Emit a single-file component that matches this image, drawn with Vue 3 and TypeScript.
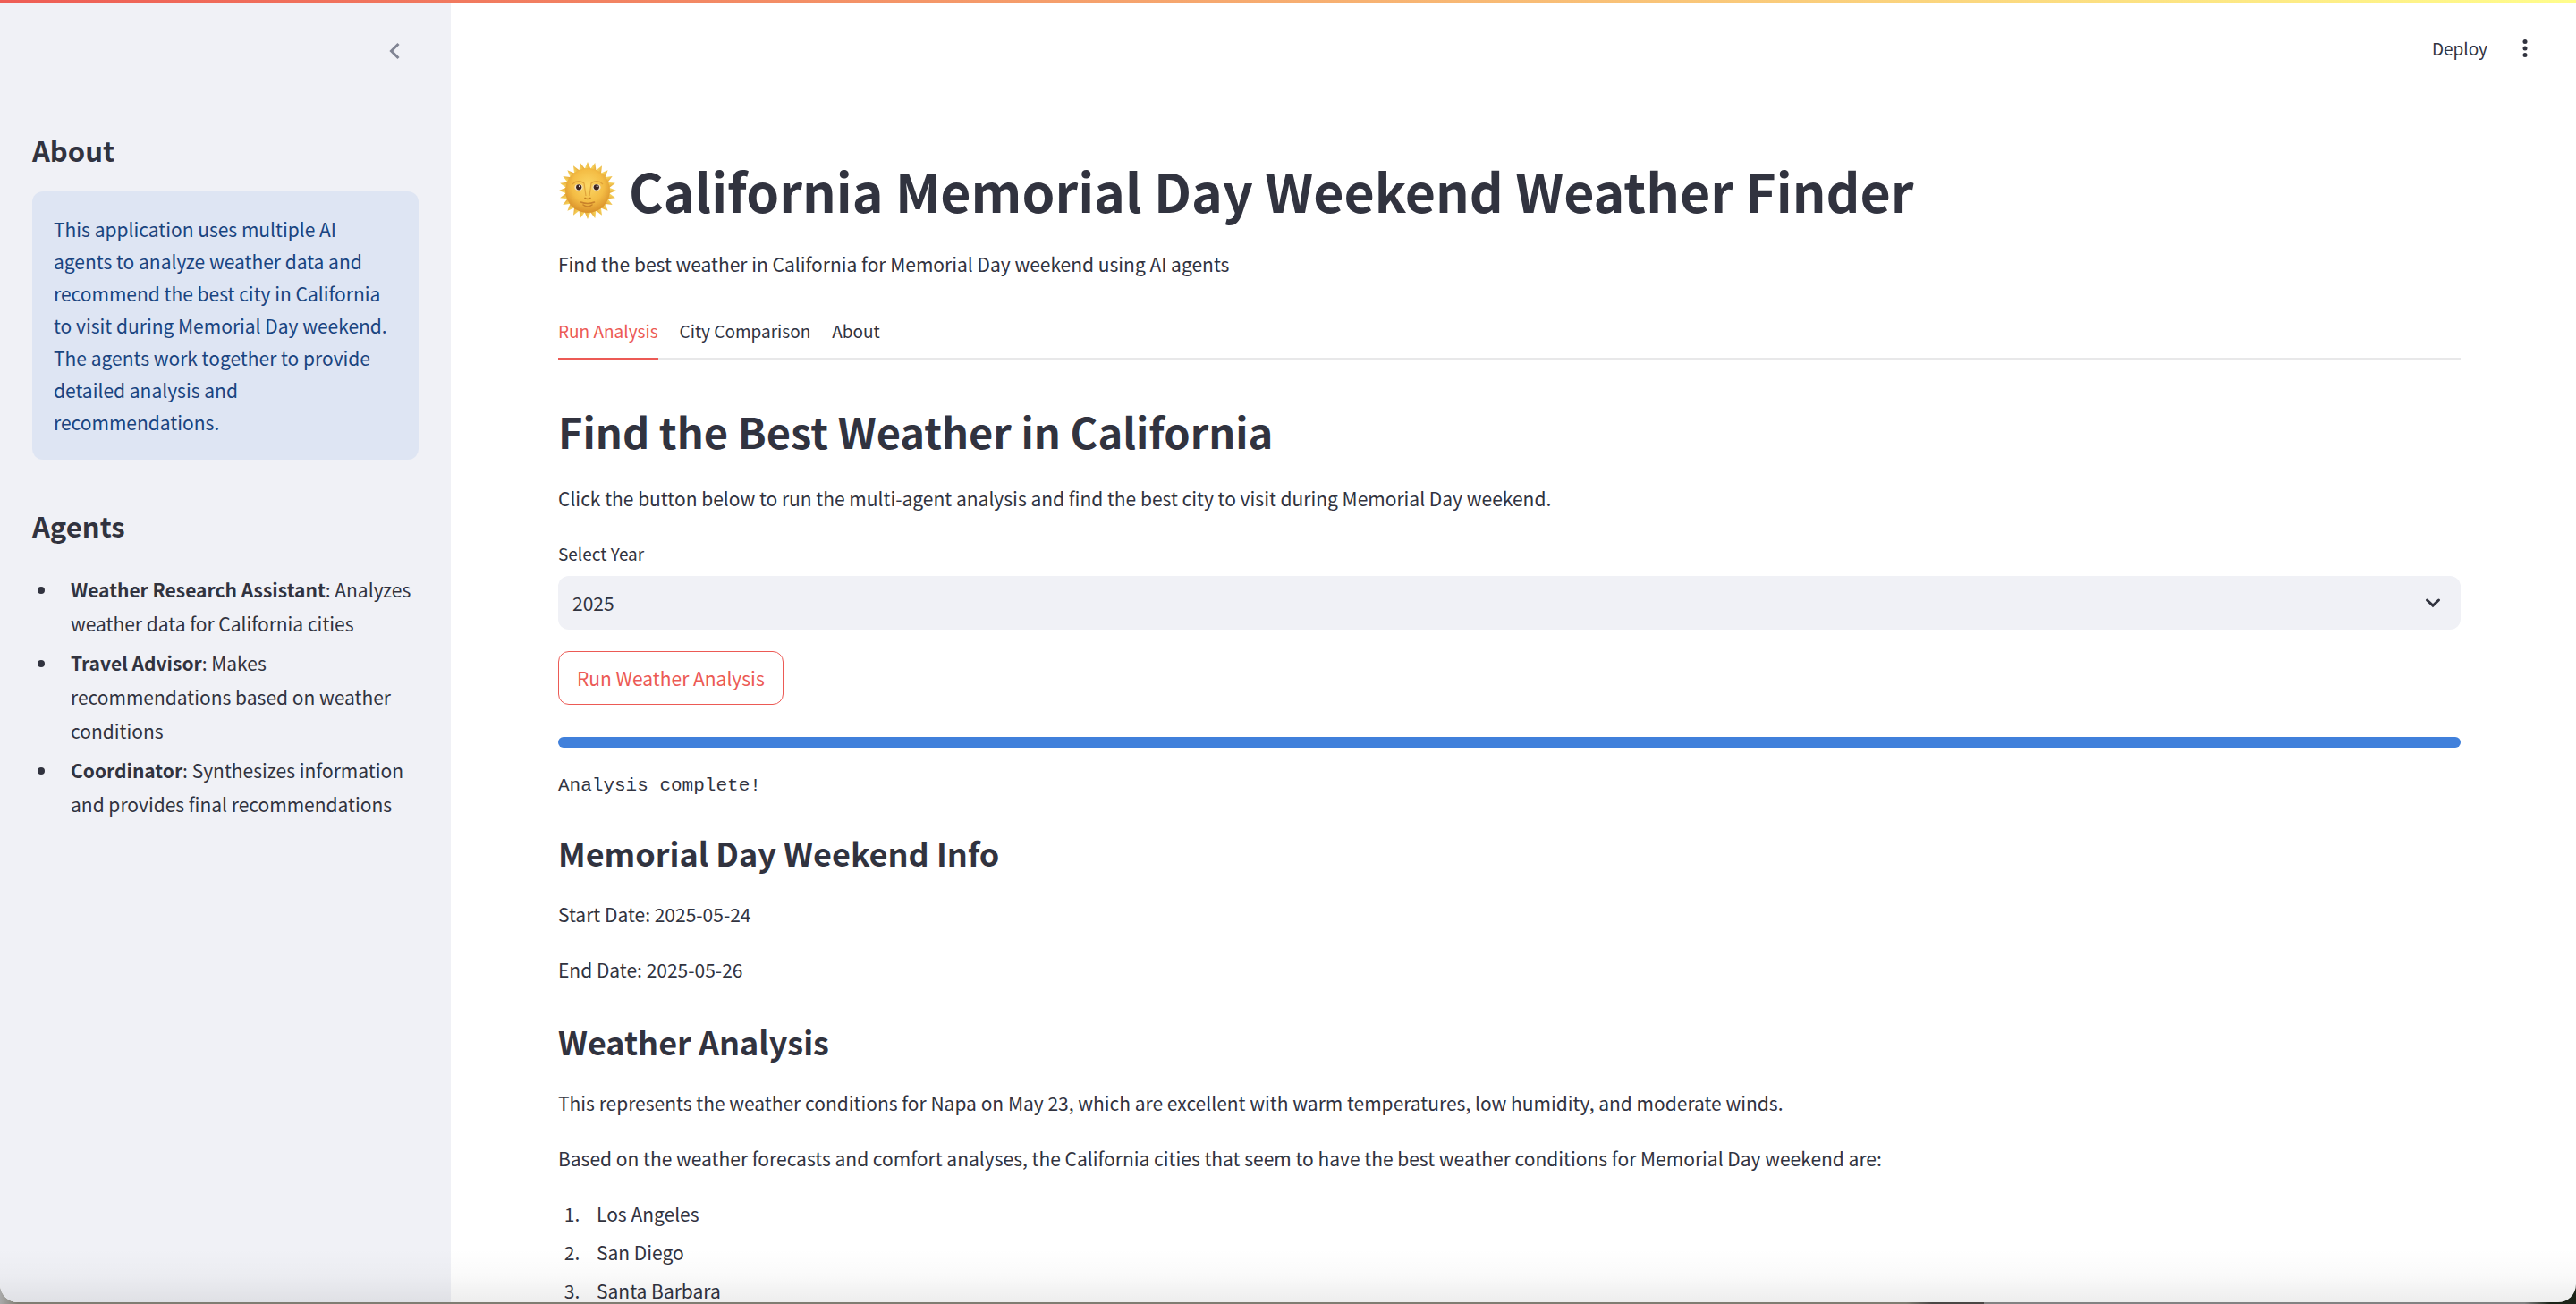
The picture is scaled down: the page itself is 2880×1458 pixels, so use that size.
<script setup lang="ts">
import { ref } from 'vue'

interface Agent {
  name: string
  role: string
}

const agents: Agent[] = [
  { name: 'Weather Research Assistant', role: 'Analyzes weather data for California cities' },
  { name: 'Travel Advisor', role: 'Makes recommendations based on weather conditions' },
  { name: 'Coordinator', role: 'Synthesizes information and provides final recommendations' },
]

const tabs = ['Run Analysis', 'City Comparison', 'About']
const activeTab = ref('Run Analysis')
const years = [2024, 2025, 2026]
const year = ref(2025)
const cities = ['Los Angeles', 'San Diego', 'Santa Barbara']

const rays = Array.from({ length: 24 }, (_, i) => i * 15)
</script>

<template>
  <div class="desktop">
    <div class="window">
      <div class="decoration"></div>
      <aside class="sidebar">
        <div class="sidebar-header">
          <button class="icon-button" type="button" aria-label="Collapse sidebar">
            <svg width="36" height="36" viewBox="0 0 36 36">
              <path d="M22.500 10 L14.500 18 L22.500 26" fill="none" stroke="#808493" stroke-width="3" />
            </svg>
          </button>
        </div>
        <h2 class="side-title">About</h2>
        <p class="notice">
          This application uses multiple AI agents to analyze weather data and recommend the best city in California to
          visit during Memorial Day weekend. The agents work together to provide detailed analysis and recommendations.
        </p>
        <h2 class="side-title agents-title">Agents</h2>
        <ul class="agents">
          <li v-for="agent in agents" :key="agent.name"><strong>{{ agent.name }}</strong>: {{ agent.role }}</li>
        </ul>
      </aside>

      <div class="page">
        <header class="toolbar">
          <button class="deploy" type="button">Deploy</button>
          <button class="icon-button" type="button" aria-label="Main menu">
            <svg width="36" height="36" viewBox="0 0 36 36" fill="#31333f">
              <circle cx="18" cy="10.500" r="2.500" />
              <circle cx="18" cy="18" r="2.500" />
              <circle cx="18" cy="25.500" r="2.500" />
            </svg>
          </button>
        </header>

        <main class="content">
          <h1 class="title">
            <svg class="sun" viewBox="0 0 66 66" role="img" aria-label="Sun with face">
              <defs>
                <radialGradient id="face" cx="0.5" cy="0.4" r="0.6">
                  <stop offset="0" stop-color="#fbd766" />
                  <stop offset="0.6" stop-color="#f4bd45" />
                  <stop offset="1" stop-color="#d9902a" />
                </radialGradient>
                <linearGradient id="ray" x1="0" y1="0" x2="1" y2="0">
                  <stop offset="0" stop-color="#fbe36a" />
                  <stop offset="1" stop-color="#e5a233" />
                </linearGradient>
              </defs>
              <path
                v-for="angle in rays"
                :key="angle"
                d="M29.200 10 L33 1 L36.800 10 Z"
                fill="url(#ray)"
                :transform="`rotate(${angle} 33 33)`"
              />
              <circle cx="33" cy="33" r="25" fill="url(#face)" />
              <path d="M16 26 Q22 20 29 25 L31 39 M50 26 Q44 20 37 25 L35 39" fill="none" stroke="#d99a35" stroke-width="1.200" opacity="0.8" />
              <ellipse cx="23" cy="29.500" rx="4.600" ry="3.400" fill="#f3e2c0" />
              <ellipse cx="43" cy="29.500" rx="4.600" ry="3.400" fill="#f3e2c0" />
              <circle cx="23.200" cy="29.300" r="3.100" fill="#3b2420" />
              <circle cx="42.800" cy="29.300" r="3.100" fill="#3b2420" />
              <circle cx="24" cy="28.300" r="1" fill="#ffffff" />
              <circle cx="43.600" cy="28.300" r="1" fill="#ffffff" />
              <path d="M29.500 41 Q33 44 36.500 41" fill="none" stroke="#c47f22" stroke-width="1.600" />
              <path d="M25.500 46 Q33 49 40.500 46 M28 49 Q33 53 38 49" fill="none" stroke="#c9822a" stroke-width="1.600" stroke-linecap="round" />
            </svg>
            <span>California Memorial Day Weekend Weather Finder</span>
          </h1>
          <p class="text">Find the best weather in California for Memorial Day weekend using AI agents</p>

          <div class="tabs" role="tablist">
            <button
              v-for="tab in tabs"
              :key="tab"
              type="button"
              role="tab"
              class="tab"
              :class="{ active: tab === activeTab }"
              :aria-selected="tab === activeTab"
              @click="activeTab = tab"
            >
              {{ tab }}
            </button>
          </div>

          <h2 class="heading">Find the Best Weather in California</h2>
          <p class="text">
            Click the button below to run the multi-agent analysis and find the best city to visit during Memorial Day
            weekend.
          </p>

          <label class="label" for="year">Select Year</label>
          <div class="select-wrap">
            <select id="year" v-model="year" class="select">
              <option v-for="y in years" :key="y" :value="y">{{ y }}</option>
            </select>
            <svg class="chevron" width="24" height="24" viewBox="0 0 24 24">
              <path d="M5.500 9 L12 15.200 L18.500 9" fill="none" stroke="#31333f" stroke-width="3" stroke-linecap="round" />
            </svg>
          </div>

          <button class="run" type="button">Run Weather Analysis</button>
          <div class="progress" role="progressbar" aria-label="Analysis progress" aria-valuenow="100"></div>
          <p class="status">Analysis complete!</p>

          <h3 class="subheading">Memorial Day Weekend Info</h3>
          <p class="text spaced">Start Date: 2025-05-24</p>
          <p class="text">End Date: 2025-05-26</p>

          <h3 class="subheading second">Weather Analysis</h3>
          <p class="text spaced">
            This represents the weather conditions for Napa on May 23, which are excellent with warm temperatures, low
            humidity, and moderate winds.
          </p>
          <p class="text spaced">
            Based on the weather forecasts and comfort analyses, the California cities that seem to have the best weather
            conditions for Memorial Day weekend are:
          </p>
          <ol class="cities">
            <li v-for="city in cities" :key="city">{{ city }}</li>
          </ol>
        </main>
      </div>
      <div class="shade"></div>
    </div>
  </div>
</template>

<style>
body {
  margin: 0;
  overflow: hidden;
}
</style>

<style scoped>
.desktop {
  height: 100vh;
  background: linear-gradient(90deg, #a9a9a9 0, #7f7d72 20px, #7f7d72 74%, #4a4644 75%, #4a4644 77%, #828282 77%, #828282 98%, #1c2418 99%);
  color: #31333f;
  font-family: "Noto Sans CJK SC", "Noto Sans", sans-serif;
  font-size: 21px;
  line-height: 38px;
}

.window {
  position: relative;
  display: flex;
  height: calc(100vh - 2px);
  overflow: hidden;
  border-radius: 0 0 20px 20px;
  background: #ffffff;
}

.decoration {
  position: absolute;
  top: 0;
  left: 0;
  right: 0;
  z-index: 2;
  height: 3px;
  background: linear-gradient(90deg, #ee5d55, #fffd8c);
}

.shade {
  position: absolute;
  left: 0;
  right: 0;
  bottom: 0;
  height: 60px;
  pointer-events: none;
  background: linear-gradient(180deg, rgba(0, 0, 0, 0), rgba(0, 0, 0, 0.02) 50%, rgba(0, 0, 0, 0.07));
}

h1,
h2,
h3,
p,
ul,
ol {
  margin: 0;
}

button,
select {
  margin: 0;
  border: 0;
  padding: 0;
  background: none;
  color: inherit;
  font: inherit;
}

.icon-button {
  display: flex;
}

.sidebar {
  flex: none;
  box-sizing: border-box;
  width: 504px;
  padding: 0 36px;
  background: #f0f1f6;
}

.sidebar-header {
  display: flex;
  justify-content: flex-end;
  padding: 39px 9px 71px 0;
}

.side-title {
  font-size: 31px;
  font-weight: 600;
  line-height: 44px;
}

.notice {
  margin-top: 24px;
  padding: 24px;
  border-radius: 12px;
  background: #dee5f3;
  color: #194480;
  line-height: 36px;
}

.agents-title {
  margin-top: 52px;
}

.agents {
  margin-top: 30px;
  padding-left: 29px;
}

.agents li {
  margin-bottom: 6px;
  padding-left: 14px;
}

.page {
  flex: 1;
  min-width: 0;
}

.toolbar {
  display: flex;
  justify-content: flex-end;
  align-items: center;
  gap: 24px;
  height: 108px;
  padding-right: 39px;
}

.deploy {
  font-size: 19px;
}

.content {
  padding: 66px 129px 0 120px;
}

.title {
  display: flex;
  align-items: center;
  gap: 13px;
  font-size: 59px;
  font-weight: 700;
  line-height: 77px;
  white-space: nowrap;
}

.sun {
  flex: none;
  width: 66px;
  height: 66px;
}

.title + .text {
  margin-top: 25px;
}

.tabs {
  display: flex;
  gap: 24px;
  height: 60px;
  margin-top: 26px;
  border-bottom: 3px solid #e8e8e9;
}

.tab {
  height: 63px;
  border-bottom: 3px solid transparent;
  font-size: 19px;
}

.tab.active {
  border-bottom-color: #ec5a55;
  color: #ec5a55;
}

.heading {
  margin-top: 46px;
  font-size: 47px;
  font-weight: 600;
  line-height: 65px;
}

.heading + .text {
  margin-top: 24px;
}

.label {
  display: block;
  margin-top: 25px;
  font-size: 19px;
  line-height: 36px;
}

.select-wrap {
  position: relative;
  margin-top: 7px;
}

.select {
  display: block;
  width: 100%;
  height: 60px;
  padding: 0 16px;
  border-radius: 12px;
  background: #f0f1f6;
  appearance: none;
}

.chevron {
  position: absolute;
  top: 18px;
  right: 19px;
  pointer-events: none;
}

.run {
  display: block;
  height: 60px;
  margin-top: 24px;
  padding: 0 20px;
  border: 1px solid #ec5a55;
  border-radius: 12px;
  color: #ec5a55;
}

.progress {
  height: 12px;
  margin-top: 36px;
  border-radius: 6px;
  background: #4080db;
}

.status {
  margin-top: 24px;
  font-family: "Liberation Mono", monospace;
}

.subheading {
  margin-top: 30px;
  font-size: 36px;
  font-weight: 600;
  line-height: 50px;
}

.subheading + .text {
  margin-top: 25px;
}

.subheading.second {
  margin-top: 36px;
}

.spaced {
  margin-bottom: 24px;
}

.cities {
  padding-left: 29px;
}

.cities li {
  margin-bottom: 5px;
  padding-left: 14px;
}
</style>
